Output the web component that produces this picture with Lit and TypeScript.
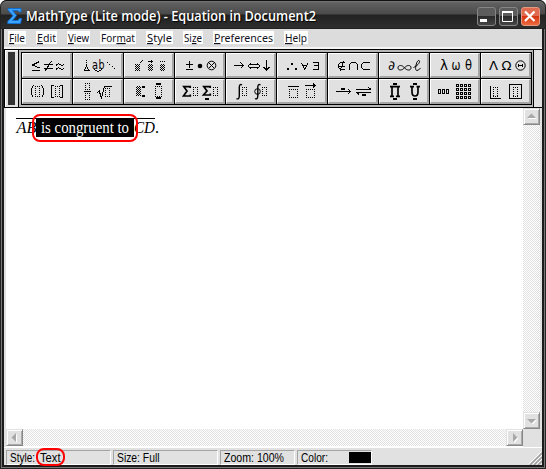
import { LitElement, html, css, svg } from "lit";
import { customElement, property } from "lit/decorators.js";

const dots = (x: number, y: number, w: number, h: number) =>
  svg`<path class="dot" d="M${x} ${y + 0.5}h${w}M${x} ${y + h - 0.5}h${w}M${x + 0.5} ${y}v${h}M${x + w - 0.5} ${y}v${h}"/>`;
const mesh = (x: number, y: number, w: number, h: number) =>
  svg`<rect x=${x} y=${y} width=${w} height=${h} fill="url(#m)"/>`;
const box = (x: number, y: number, w: number, h: number) =>
  svg`<rect class="s" x=${x + 0.5} y=${y + 0.5} width=${w - 1} height=${h - 1}/>`;
const bar = (x: number, y: number, w: number, h: number) =>
  svg`<rect x=${x} y=${y} width=${w} height=${h}/>`;
const line = (d: string) => svg`<path class="s" d=${d}/>`;
const soft = (d: string) => svg`<path class="a" d=${d}/>`;
const glyph = (x: number, y: number, t: string, size = 14, w = 8) =>
  svg`<text x=${x} y=${y} font-size=${size} textLength=${w} lengthAdjust="spacingAndGlyphs">${t}</text>`;

const palettes = [
  [
    // relations
    svg`${soft("M17.5 8.5L10.5 12L17.5 15M10 17H18M22 11.5H30.5M22 15H30.5M29.5 8L23 18M34 12.5L36 10.8H37L39.5 12.5H40.5L42.5 10.8M34 16.5L36 14.8H37L39.5 16.5H40.5L42.5 14.8")}`,
    svg`${line("M13.5 7v1M13.5 9v1M13.5 11v2")}${soft("M13.5 13L11.5 17.5H16L13.5 13")}${glyph(19, 16, "a", 12, 6)}${glyph(25.5, 16, "b", 12, 6)}${soft("M21.5 16.5Q25 20 29 16.5")}${bar(34, 9, 1, 1)}${bar(36, 11, 1, 1)}${bar(39, 13, 1, 1)}${bar(41, 15, 1, 1)}`,
    svg`${mesh(11, 11, 5, 7)}${soft("M15.5 10.5L19 7")}${mesh(24, 11, 5, 7)}${line("M24 8.5h5")}${bar(27, 7, 1, 3)}${mesh(36, 11, 5, 7)}${bar(36, 8, 1, 1)}${bar(38, 8, 1, 1)}${bar(40, 8, 1, 1)}`,
    svg`${line("M14.5 8v7M11 11.5h7M11 16.5h7")}<circle cx="25" cy="13" r="2.3"/><circle class="r" cx="36.5" cy="12.5" r="4.3"/>${soft("M33.5 9.5L39.5 15.5M39.5 9.5L33.5 15.5")}`,
    svg`${line("M8 12.5h9M24 11.5h8M24 14.5h8M40.5 7v10")}${soft("M14.5 9.5L17.5 12.5L14.5 15.5M25 10L22 13L25 16M31 10L34 13L31 16M37.5 14L40.5 17.3L43.5 14")}`,
    svg`${bar(10, 15, 2, 2)}${bar(14, 10, 2, 2)}${bar(18, 15, 2, 2)}${soft("M24.5 10L27.7 16.5L31 10M26 12.5H29.5")}${line("M36 9.5h5.5v7h-5.5M37 12.5h4")}`,
    svg`${soft("M17 9.5H14Q10.5 10 10.5 13Q10.5 16 14 16.5H17M11 13H17M15.8 8L12 18M21.5 17V13Q21.5 9.5 25.5 9.5Q29.5 9.5 29.5 13V17M42 9.5H37Q33.5 10 33.5 13Q33.5 16 37 16.5H42")}`,
    svg`${glyph(9, 17, "∂", 13, 7)}<path class="r" d="M25.5 14.8C23.5 12 19 11.5 19 14.8C19 18 23.5 17.5 25.5 14.8C27.5 12 32 11.5 32 14.8C32 18 27.5 17.5 25.5 14.8"/><path class="r" d="M34.5 14.5C38 13 41 10 40.5 8C40 6.5 38 8 37.3 11C36.5 14 36 17.5 38 17.5Q39.5 17.5 41.5 15"/>`,
    svg`${glyph(10, 17, "λ", 14, 8)}${glyph(21.5, 17, "ω", 14, 9)}${glyph(35, 17, "θ", 14, 7)}`,
    svg`${glyph(8, 17, "Λ", 12, 9)}${glyph(20.5, 17, "Ω", 12, 10)}<circle class="r" cx="39.5" cy="12.5" r="4.7"/>${line("M37.5 11v3M41.5 11v3M38 12.5h3")}`,
  ],
  [
    svg`${soft("M11.5 6.5Q9.5 8.5 9.5 12.5Q9.5 16.5 11.5 18.5M19.5 6.5Q21.5 8.5 21.5 12.5Q21.5 16.5 19.5 18.5")}${dots(13, 7, 5, 11)}${line("M31.5 6.5h-2v12h2M38 6.5h2v12h-2")}${dots(33, 7, 5, 11)}`,
    svg`${dots(12, 4, 5, 7)}${line("M11 12.5h7")}${dots(12, 14, 5, 7)}${soft("M24.5 13.5L26.5 12L28.5 18.5L31.5 7.5H39")}${soft("M26 12L28 18")}${dots(32, 9, 5, 9)}`,
    svg`${mesh(12, 7, 5, 10)}${bar(18, 7, 3, 2)}${bar(18, 16, 3, 2)}${dots(31, 7, 7, 11)}${bar(32, 4, 5, 2)}${bar(32, 18, 5, 2)}`,
    svg`<path class="b" d="M15.2 9V7.7H8.8L12 12L8.5 17H15.3V15.5"/>${dots(18, 8, 5, 9)}<path class="b" d="M35.2 9V7.7H28.8L32 12L28.5 16H35.3V14.5"/>${bar(30, 19, 4, 2)}${dots(38, 8, 5, 9)}`,
    svg`<path class="c" d="M16 6Q13.5 4.5 13.3 8V17Q13 21 10.5 19.5M34.5 6Q32 4.5 31.8 8V17Q31.5 21 29 19.5"/><circle class="r" cx="31.5" cy="12.5" r="2.8"/>${dots(16, 8, 5, 9)}${dots(36, 8, 5, 9)}`,
    svg`${line("M11 7.5h11M28 6.5h10")}${soft("M36 4.5L38.5 6.5L36 8.5")}${dots(12, 10, 9, 9)}${dots(29, 10, 9, 9)}`,
    svg`${line("M8 12.5h15M28 10.5h15M28 13.5h15")}${soft("M20 9.8L22.8 12.5L20 15.3M40.5 8.5L43 10.5M28.5 13.5L31 15.5")}${bar(13, 9, 4, 2)}${bar(34, 15, 4, 2)}`,
    svg`<path class="b" d="M11 7.7H21M11 17.3H15M17 17.3H21M13 7.5V17.5M19 7.5V17.5M31 7.7H35M37.5 7.7H41M33 8V13Q33 17 36 17Q39 17 39 13V8"/>${bar(14, 4, 4, 2)}${bar(14, 19, 4, 2)}${bar(34, 4, 4, 2)}${bar(34, 19, 4, 2)}`,
    svg`${[0, 1, 2].map((i) => box(8 + i * 4, 10, 3, 5))}${[0, 1, 2, 3].map((r) => [0, 1, 2, 3].map((c) => box(26 + c * 4, 5 + r * 4, 3, 3)))}`,
    svg`${line("M9.5 7v12.5h10")}${dots(12, 8, 5, 10)}${box(28, 5, 13, 15)}${dots(32, 8, 5, 10)}`,
  ],
];

@customElement("palette-button")
class PaletteButton extends LitElement {
  @property({ attribute: false }) icon: unknown;
  static styles = css`
    :host { display: block; box-sizing: border-box; background: #e1e1e1; border: 1px solid #fff; border-right: 2px solid #a4a4a4; border-bottom: 2px solid #a4a4a4; }
    svg { display: block; margin: -1px; overflow: visible; }
    .s { fill: none; stroke: #000; shape-rendering: crispEdges; }
    .a { fill: none; stroke: #000; stroke-width: 1; shape-rendering: crispEdges; }
    .r { fill: none; stroke: #000; stroke-width: 1; }
    .c { fill: none; stroke: #000; stroke-width: 1.4; }
    .b { fill: none; stroke: #000; stroke-width: 1.7; }
    .dot { fill: none; stroke: #000; stroke-dasharray: 1 1; shape-rendering: crispEdges; }
    text { font-family: "DejaVu Sans", sans-serif; }
  `;
  render() {
    return html`<svg width="50" height="25" viewBox="0 0 50 25">
      <defs><pattern id="m" width="2" height="2" patternUnits="userSpaceOnUse"><path d="M0 0h1v1h-1zM1 1h1v1h-1z" shape-rendering="crispEdges"/></pattern></defs>
      ${this.icon}
    </svg>`;
  }
}

@customElement("scroll-arrow")
class ScrollArrow extends LitElement {
  @property() d = "";
  static styles = css`
    :host { display: block; box-sizing: border-box; width: 17px; height: 17px; background: #e1e1e1; border: 1px solid #e1e1e1; border-right-color: #888; border-bottom-color: #888; box-shadow: inset 1px 1px #fff, inset -1px -1px #aaa; }
    svg { display: block; }
  `;
  render() {
    return html`<svg width="15" height="15"><path d=${this.d} fill="#fff" transform="translate(1 1)"/><path d=${this.d} fill="#a8a8a8"/></svg>`;
  }
}

const menus: [string, string, string, number][] = [
  ["", "F", "ile", 18], ["", "E", "dit", 21], ["", "V", "iew", 23], ["For", "m", "at", 36],
  ["", "S", "tyle", 27], ["Si", "z", "e", 20], ["", "P", "references", 61], ["", "H", "elp", 24],
];

@customElement("app-root")
class AppRoot extends LitElement {
  static styles = css`
    :host { display: block; width: 546px; height: 469px; background: #fff; }
    .window { position: relative; box-sizing: border-box; height: 469px; padding: 0 4px 4px; border-radius: 7px 7px 0 0; overflow: hidden; background: #1e1b1c; box-shadow: inset 0 0 0 1px #242424, inset 0 0 0 2px #777; display: flex; flex-direction: column; }
    .title { height: 29px; margin: 0 -3px; padding: 0 5px 0 6px; box-sizing: border-box; flex: none; display: flex; align-items: center; border-radius: 6px 6px 0 0; border-top: 1px solid #111; background: linear-gradient(#777 0, #606060 2px, #4a4a4a 13px, #222 14px, #2e2e2e 27px, #111 28px); }
    .title svg { display: block; flex: none; overflow: visible; }
    .name { margin-left: 4px; flex: 1; padding-top: 2px; color: #fff; font: 600 14px "Open Sans", sans-serif; white-space: nowrap; text-shadow: 1px 1px 1px #000; }
    .ctl { display: flex; gap: 3px; padding-top: 2px; }
    .ctl i { width: 17px; height: 17px; border: 1px solid #858585; border-radius: 3px; background: linear-gradient(#5c5c5c 50%, #2b2b2b 50%, #454545); display: block; }
    .ctl i.x { border-color: #e59a82; background: linear-gradient(#df6c50 45%, #d83511 50%, #ed6a3f); }
    .menu { height: 20px; flex: none; display: flex; gap: 10px; padding: 2px 0 0 4px; box-sizing: border-box; background: #dcdcdc; border-bottom: 2px solid #f4f4f4; }
    .menu span { height: 13px; background: #fff; display: block; }
    .menu text { font: 11.5px "Noto Sans", sans-serif; fill: #101020; }
    .menu svg { display: block; overflow: visible; }
    .menu tspan { text-decoration: underline; }
    .tools { height: 59px; flex: none; box-sizing: border-box; border: 1px solid #000; border-right: 0; display: flex; background: #e1e1e1; }
    .grip { width: 14px; box-sizing: border-box; border-right: 1px solid #000; padding: 2px 3px; box-shadow: inset 1px 1px #fff; }
    .grip i { display: block; height: 53px; width: 7px; background: #333; }
    .tray { width: 515px; box-sizing: border-box; background: #b8b8b8; border-right: 1px solid #000; padding: 2px; }
    .grid { display: grid; grid-template-columns: repeat(10, 50px); grid-template-rows: 25px 25px; gap: 1px; background: #000; border: 1px solid #000; width: 509px; }
    .work { height: 339px; flex: none; display: grid; grid-template-columns: 517px 17px; grid-template-rows: 321px 18px; background: #fff; box-sizing: border-box; border: 0 solid #e1e1e1; border-width: 0 2px; }
    .doc { padding: 9px 0 0 10px; font: 16px "Liberation Serif", serif; }
    .eq { display: flex; height: 20px; width: 160px; }
    .eq svg { display: block; overflow: visible; }
    .track { background: repeating-conic-gradient(#e1e1e1 0 25%, #fff 0 50%) 0 0 / 2px 2px; display: flex; justify-content: space-between; }
    .v { flex-direction: column; }
    .h { height: 17px; }
    .corner { background: #e1e1e1; }
    .status { flex: 1; background: #e1e1e1; border-top: 1px solid #fff; display: flex; gap: 2px; padding: 2px 0 0 2px; box-sizing: border-box; }
    .pane { box-sizing: border-box; height: 15px; border: 1px solid #fff; border-top-color: #a4a4a4; border-left-color: #a4a4a4; padding-left: 3px; display: flex; }
    .pane svg { display: block; overflow: visible; }
    .pane text { font: 12.5px "Liberation Sans", sans-serif; }
    .p1, .p2 { width: 105px; }
    .p3, .p4 { width: 75px; }
    .swatch { width: 22px; height: 11px; margin: 1px 0 0 auto; background: #000; }
    .size { margin-left: auto; align-self: flex-end; display: block; }
    .ring { position: absolute; box-sizing: border-box; border: 2px solid #f00; }
    .r1 { left: 32px; top: 114px; width: 106px; height: 28px; border-radius: 8px; }
    .r2 { left: 36px; top: 448px; width: 29px; height: 18px; border-radius: 8px; }
  `;
  render() {
    return html`<div class="window">
      <div class="title">
        <svg width="15" height="17"><path d="M1 1.5H14V5H12.5L11 3.5H5.5L9.5 8.5L5.5 13.5H11L12.5 11.5H14.5L13.5 16.5H0.8V14.5L6 8.8L1 3Z" fill="#3ba4ff" stroke="#126fd0"/></svg>
        <div class="name"><svg width="300" height="20"><text x="0" y="15" fill="#fff" textLength="290" lengthAdjust="spacingAndGlyphs">MathType (Lite mode) - Equation in Document2</text></svg></div>
        <div class="ctl">
          <i><svg width="17" height="17"><path d="M2 11h7v3h-7z" fill="#fff"/></svg></i>
          <i><svg width="17" height="17"><path d="M2.5 3v10.5h10V3" fill="none" stroke="#fff"/><path d="M2 3h11v2h-11z" fill="#fff"/></svg></i>
          <i class="x"><svg width="17" height="17"><path d="M3 3.5l9.5 9.5M12.5 3.5l-9.5 9.5" stroke="#fff" stroke-width="2.2"/></svg></i>
        </div>
      </div>
      <div class="menu">${menus.map(([a, u, b, w]) => html`<span><svg width=${w} height="13"><text x="1" y="11" textLength=${w - 2} lengthAdjust="spacingAndGlyphs">${a}<tspan>${u}</tspan>${b}</text></svg></span>`)}</div>
      <div class="tools">
        <div class="grip"><i></i></div>
        <div class="tray"><div class="grid">${palettes.flat().map((p) => html`<palette-button .icon=${p}></palette-button>`)}</div></div>
      </div>
      <div class="work">
        <div class="doc"><div class="eq"><svg width="160" height="20">
          <path d="M0 1.5H139" stroke="#000"/>
          <text x="0.5" y="16" font-style="italic" textLength="20" lengthAdjust="spacingAndGlyphs">AB</text>
          <rect x="20" y="1" width="98" height="19"/>
          <text x="25" y="16" fill="#fff" textLength="88" lengthAdjust="spacingAndGlyphs">is congruent to</text>
          <text x="118" y="16" font-style="italic" textLength="21" lengthAdjust="spacingAndGlyphs">CD</text>
          <text x="139" y="16">.</text>
        </svg></div></div>
        <div class="track v"><scroll-arrow d="M3 9h9l-4.5 -4.5z"></scroll-arrow><scroll-arrow d="M3 6h9l-4.5 4.5z"></scroll-arrow></div>
        <div class="track h"><scroll-arrow d="M9 3v9l-4.5 -4.5z"></scroll-arrow><scroll-arrow d="M6 3v9l4.5 -4.5z"></scroll-arrow></div>
        <div class="corner"></div>
      </div>
      <div class="status">
        <div class="pane p1"><svg width="80" height="13"><text x="0" y="11" textLength="25" lengthAdjust="spacingAndGlyphs">Style:</text><text x="30" y="11" textLength="20.5" lengthAdjust="spacingAndGlyphs">Text</text></svg></div>
        <div class="pane p2"><svg width="80" height="13"><text x="0" y="11" textLength="42.5" lengthAdjust="spacingAndGlyphs">Size: Full</text></svg></div>
        <div class="pane p3"><svg width="68" height="13"><text x="0" y="11" textLength="60" lengthAdjust="spacingAndGlyphs">Zoom: 100%</text></svg></div>
        <div class="pane p4"><svg width="30" height="13"><text x="0" y="11" textLength="27" lengthAdjust="spacingAndGlyphs">Color:</text></svg><div class="swatch"></div></div>
        <svg class="size" width="13" height="13"><path d="M1 13L13 1M5 13L13 5M9 13L13 9" stroke="#a0a0a0" stroke-width="1.6"/><path d="M0 12L12 0M4 12L13 3M8 12L13 7" stroke="#fff"/></svg>
      </div>
      <div class="ring r1"></div><div class="ring r2"></div>
    </div>`;
  }
}
